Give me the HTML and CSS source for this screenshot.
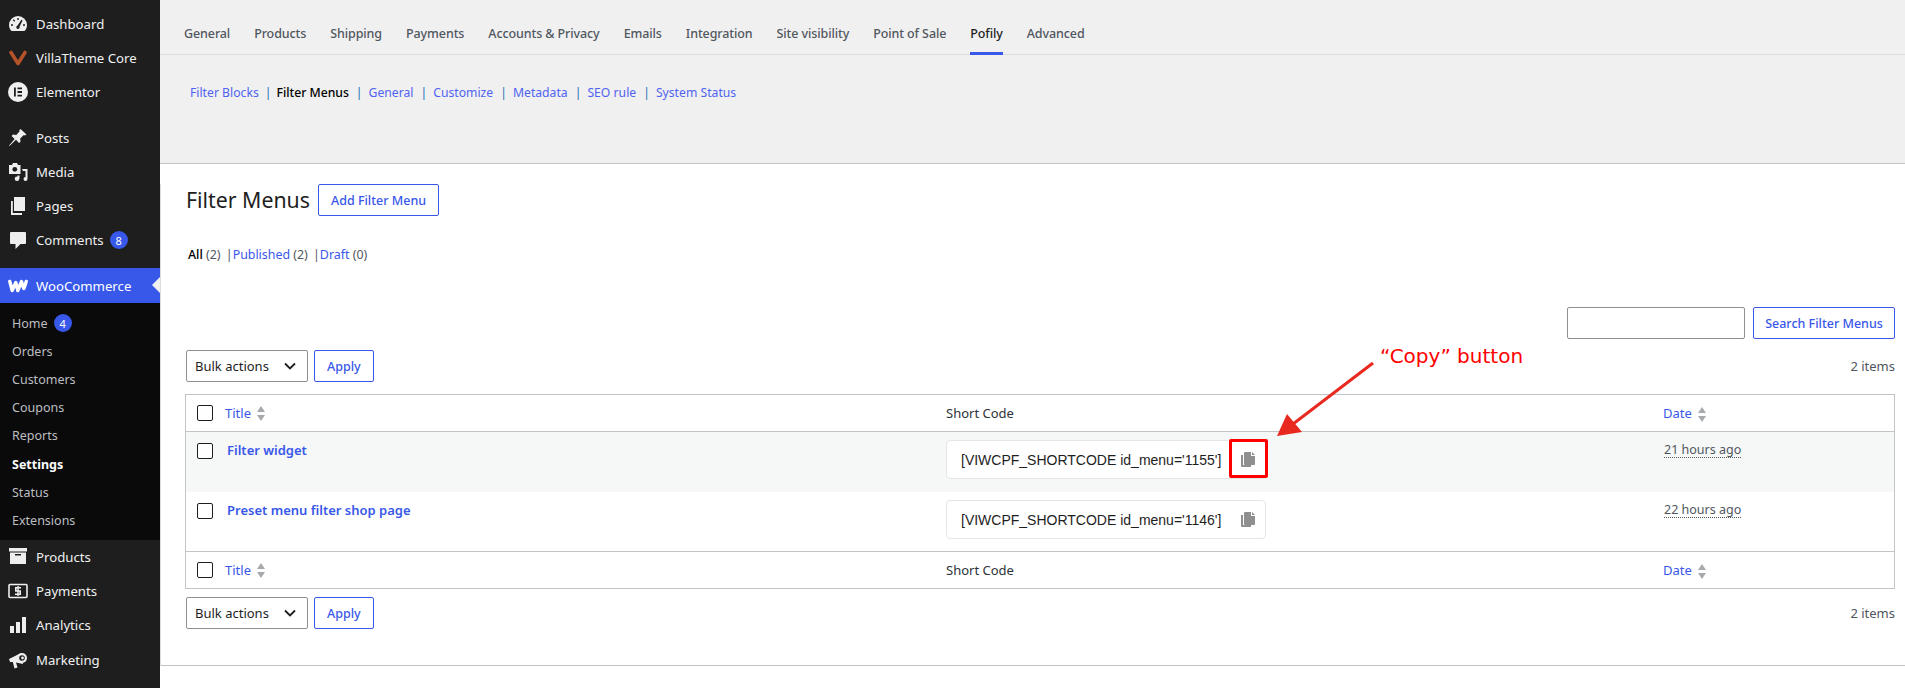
FILE: index.html
```html
<!DOCTYPE html>
<html lang="en">
<head>
    <meta charset="UTF-8">
    <title>Filter Menus</title>
    <link rel="stylesheet" href="styles.css">
</head>

<body>

<div class="wrap">

<nav class="sidebar">
    <ul class="menu">
        <li><svg class="ico" viewBox="0 0 20 20"><path fill="#eee" d="M10 2a9 9 0 0 0-9 9c0 2.700 1.100 4.700 2.600 6h12.800c1.500-1.300 2.600-3.300 2.600-6a9 9 0 0 0-9-9z"/><path fill="#1e1e1e" d="M9.300 4h1.400v2H9.300zM4.800 6.300l1-1 1.400 1.400-1 1zM3 10.300h2v1.400H3zM15 10.300h2v1.400h-2zM13.400 5.800l1.200.7-3 6a1.700 1.700 0 1 1-2-1z"/></svg>Dashboard</li>
        <li><svg class="ico" viewBox="0 0 20 20"><path fill="none" stroke="#b4532a" stroke-width="3.600" stroke-linecap="round" stroke-linejoin="round" d="M3 4.500l7 11 7-11"/></svg>VillaTheme Core</li>
        <li><svg class="ico" viewBox="0 0 20 20"><circle cx="10" cy="10" r="10" fill="#f0f0f1"/><path fill="#1e1e1e" d="M6 5.500h1.800v9H6zM9.500 5.500H14v1.800H9.500zM9.500 9.100H14v1.800H9.500zM9.500 12.700H14v1.800H9.500z"/></svg>Elementor</li>
        <li class="sep"><svg class="ico" viewBox="0 0 20 20"><path fill="#eee" d="M12.500 1l6 5.500-1.700 1-1-.4-3.600 3.300.3 3.300-1.500 1.300-3-3.200L1.500 18l-.4-.5 5.500-6.500-3-3 1.400-1.400 3.300.4 3.300-3.700-.3-1z"/></svg>Posts</li>
        <li><svg class="ico" viewBox="0 0 20 20"><path fill="#eee" d="M1 3h3l1-2h4l1 2h2.500v9H1z"/><circle cx="6.800" cy="7.300" r="2.400" fill="#1e1e1e"/><path fill="#eee" d="M14 7h5.500v10a2 2 0 1 1-2-2v-6H15z"/><circle cx="9" cy="16.700" r="2.300" fill="#eee"/><path fill="#eee" d="M9.500 13.500h2v3h-2z"/></svg>Media</li>
        <li><svg class="ico" viewBox="0 0 20 20"><path fill="#eee" d="M6 1h11v14H6z"/><path fill="#eee" d="M3 5h1.800v12H14v2H3z"/></svg>Pages</li>
        <li><svg class="ico" viewBox="0 0 20 20"><path fill="#eee" d="M3 2h14a1 1 0 0 1 1 1v10a1 1 0 0 1-1 1h-4.500L7.500 19v-5H3a1 1 0 0 1-1-1V3a1 1 0 0 1 1-1z"/></svg>Comments <span class="badge">8</span></li>
        <li class="sep current"><svg class="ico" viewBox="0 0 20 20"><path fill="none" stroke="#fff" stroke-width="3.400" stroke-linejoin="round" stroke-linecap="round" d="M1.800 5.500l2.400 9 3.600-8 2 8 3.700-9c.8 3.500 1.500 5.500 2.300 7 1-2 1.500-4 2.400-7"/></svg>WooCommerce</li>
    </ul>
    <ul class="submenu">
        <li>Home <span class="badge">4</span></li>
        <li>Orders</li>
        <li>Customers</li>
        <li>Coupons</li>
        <li>Reports</li>
        <li class="active">Settings</li>
        <li>Status</li>
        <li>Extensions</li>
    </ul>
    <ul class="menu">
        <li><svg class="ico" viewBox="0 0 20 20"><path fill="#eee" d="M1 1h18v3.500H1zM2 5.500h16V17H2z"/><path fill="#1e1e1e" d="M7 7h6v1.500H7z"/></svg>Products</li>
        <li><svg class="ico" viewBox="0 0 20 20"><rect x="1" y="3.500" width="18" height="13" rx="1" fill="none" stroke="#eee" stroke-width="1.600"/><path fill="#eee" d="M7 6h6v1.600H8.600v1.600H13V14H7v-1.600h4.400v-1.600H7z"/><path fill="#eee" d="M9.300 5h1.400v10H9.300z"/></svg>Payments</li>
        <li><svg class="ico" viewBox="0 0 20 20"><path fill="#eee" d="M2 11h4v7H2zM8 7h4v11H8zM14 2h4v16h-4z"/></svg>Analytics</li>
        <li class="last"><svg class="ico" viewBox="0 0 20 20"><path fill="#eee" d="M1 9l12-6 2 11-7-1.500 1.500 5-3 1-1.700-6.500H2z"/><circle cx="14" cy="8" r="5" fill="#eee"/><circle cx="14" cy="8" r="2.800" fill="#1e1e1e"/><circle cx="14.500" cy="8" r="1.400" fill="#eee"/></svg>Marketing</li>
    </ul>
</nav>

<main class="main">
    <div class="topbar">
        <div class="tabs">
            <a>General</a>
            <a>Products</a>
            <a>Shipping</a>
            <a>Payments</a>
            <a>Accounts &amp; Privacy</a>
            <a>Emails</a>
            <a>Integration</a>
            <a>Site visibility</a>
            <a>Point of Sale</a>
            <a class="on">Pofily</a>
            <a>Advanced</a>
        </div>
        <div class="subtabs">
            <a>Filter Blocks</a><i>|</i>
            <a class="on">Filter Menus</a><i class="wide">|</i>
            <a>General</a><i class="wide">|</i>
            <a>Customize</a><i class="wide">|</i>
            <a>Metadata</a><i class="wide">|</i>
            <a>SEO rule</a><i class="wide">|</i>
            <a>System Status</a>
        </div>
    </div>

    <div class="page">
        <div class="title-row">
            <h1>Filter Menus</h1>
            <button class="btn">Add Filter Menu</button>
        </div>

        <div class="views">
            <b>All</b> <span class="count">(2)</span>
            <i>|</i><a>Published</a> <span class="count">(2)</span>
            <i>|</i><a>Draft</a> <span class="count">(0)</span>
        </div>

        <div class="search-row">
            <input class="search" type="text">
            <button class="btn btn-search">Search Filter Menus</button>
        </div>

        <div class="tablenav nav-top">
            <div class="bulk">
                <div class="select">Bulk actions
                    <svg viewBox="0 0 12 8" width="12" height="8"><path d="M1 1.500l5 5 5-5" fill="none" stroke="#1e1e1e" stroke-width="1.800"/></svg>
                </div>
                <button class="btn">Apply</button>
            </div>
            <span class="num">2 items</span>
        </div>

        <table class="list">
            <colgroup><col class="c1"><col class="c2"><col class="c3"></colgroup>
            <thead>
                <tr>
                    <th><div class="cell"><input type="checkbox"><a>Title</a><span class="sort"></span></div></th>
                    <th>Short Code</th>
                    <th><a>Date</a><span class="sort"></span></th>
                </tr>
            </thead>
            <tbody>
                <tr class="alt">
                    <td><div class="cell"><input type="checkbox"><a class="name">Filter widget</a></div></td>
                    <td>
                        <div class="code">[VIWCPF_SHORTCODE id_menu='1155']
                            <span class="copy marked">
                                <svg viewBox="0 0 14 15" width="14" height="15"><path fill="#8f8f8f" d="M0 3h2v10h8v2H1a1 1 0 0 1-1-1z"/><path fill="#8f8f8f" d="M3 1a1 1 0 0 1 1-1h6v4h4v8a1 1 0 0 1-1 1H4a1 1 0 0 1-1-1z"/><path fill="#8f8f8f" d="M11 0l3 3h-3z"/></svg>
                            </span>
                        </div>
                    </td>
                    <td><abbr>21 hours ago</abbr></td>
                </tr>
                <tr>
                    <td><div class="cell"><input type="checkbox"><a class="name">Preset menu filter shop page</a></div></td>
                    <td>
                        <div class="code">[VIWCPF_SHORTCODE id_menu='1146']
                            <span class="copy">
                                <svg viewBox="0 0 14 15" width="14" height="15"><path fill="#8f8f8f" d="M0 3h2v10h8v2H1a1 1 0 0 1-1-1z"/><path fill="#8f8f8f" d="M3 1a1 1 0 0 1 1-1h6v4h4v8a1 1 0 0 1-1 1H4a1 1 0 0 1-1-1z"/><path fill="#8f8f8f" d="M11 0l3 3h-3z"/></svg>
                            </span>
                        </div>
                    </td>
                    <td><abbr>22 hours ago</abbr></td>
                </tr>
            </tbody>
            <tfoot>
                <tr>
                    <th><div class="cell"><input type="checkbox"><a>Title</a><span class="sort"></span></div></th>
                    <th>Short Code</th>
                    <th><a>Date</a><span class="sort"></span></th>
                </tr>
            </tfoot>
        </table>

        <div class="tablenav nav-bottom">
            <div class="bulk">
                <div class="select">Bulk actions
                    <svg viewBox="0 0 12 8" width="12" height="8"><path d="M1 1.500l5 5 5-5" fill="none" stroke="#1e1e1e" stroke-width="1.800"/></svg>
                </div>
                <button class="btn">Apply</button>
            </div>
            <span class="num">2 items</span>
        </div>

        <div class="rule"></div>
    </div>
</main>

<!-- annotation drawn on top of the screenshot -->
<span class="note">“Copy” button</span>
<svg class="arrow" viewBox="0 0 110 85" width="110" height="85">
    <path d="M100 5L20 66" stroke="#e8291f" stroke-width="3" fill="none"/>
    <path d="M4 78L14 56 29 74z" fill="#e8291f"/>
</svg>

</div>

</body>
</html>
```

FILE: styles.css
```css
*, *::before, *::after {
    box-sizing: border-box;
}

body {
    margin: 0;
    background: #fff;
    color: #1e1e1e;
    font-family: "Noto Sans", sans-serif;
    font-size: 13px;
}

.wrap {
    position: relative;
    display: flex;
    height: 688px;
    overflow: hidden;
}

a {
    color: #3858e9;
}

/* sidebar */
.sidebar {
    flex: 0 0 160px;
    padding-top: 7px;
    background: #1e1e1e;
    color: #f0f0f1;
}

.sidebar ul {
    margin: 0;
    padding: 0;
    list-style: none;
}

.menu li {
    display: flex;
    align-items: center;
    height: 34px;
    padding-left: 8px;
    font-size: 13.200px;
}

.menu .sep {
    margin-top: 12px;
}

.menu .last {
    margin-top: 1px;
}

.ico {
    flex: none;
    width: 20px;
    height: 20px;
    margin-right: 8px;
}

.menu .current {
    position: relative;
    height: 35px;
    margin-top: 11px;
    background: #3858e9;
    color: #fff;
}

.current::after {
    content: "";
    position: absolute;
    right: 0;
    top: 9px;
    border: 8px solid transparent;
    border-left-width: 0;
    border-right-color: #f0f0f1;
}

.badge {
    display: inline-flex;
    align-items: center;
    justify-content: center;
    width: 18px;
    height: 18px;
    margin-left: 6px;
    border-radius: 50%;
    background: #3858e9;
    color: #fff;
    font-size: 11px;
}

.submenu {
    height: 237px;
    padding-top: 6px !important;
    background: #0a0a0a;
    color: #bdbec1;
}

.submenu li {
    display: flex;
    align-items: center;
    height: 28.200px;
    padding-left: 12px;
    font-size: 12.500px;
}

.submenu .active {
    color: #fff;
    font-weight: 700;
}

/* settings tabs */
.main {
    flex: 1;
    min-width: 0;
}

.topbar {
    height: 164px;
    background: #f0f0f1;
    border-bottom: 1px solid #c3c4c7;
}

.tabs {
    display: flex;
    gap: 24px;
    height: 55px;
    padding-left: 24px;
    border-bottom: 1px solid #dcdcde;
    font-size: 12.500px;
    letter-spacing: -0.100px;
}

.tabs a {
    height: 55px;
    padding-top: 24px;
    color: #50575e;
    line-height: 20px;
    font-weight: 500;
}

.tabs .on {
    color: #1e1e1e;
    border-bottom: 3px solid #3858e9;
}

.subtabs {
    display: flex;
    align-items: center;
    height: 20px;
    margin-top: 27px;
    padding-left: 30px;
    font-size: 12.200px;
}

.subtabs a {
    color: #4f63f0;
}

.subtabs .on {
    color: #000;
    font-weight: 500;
}

.subtabs i {
    margin: 0 5px 0 6px;
    color: #2271b1;
    font-style: normal;
}

.subtabs .wide {
    margin: 0 6px 0 7px;
}

/* page */
.page {
    padding: 0 10px 0 24px;
    border-left: 1px solid #dcdcde;
}

.title-row {
    display: flex;
    align-items: center;
    gap: 8px;
    margin-top: 20px;
}

h1 {
    margin: 0;
    padding-left: 1px;
    font-size: 21.300px;
    font-weight: 400;
    line-height: 32px;
}

.btn {
    height: 32px;
    padding: 0 12px;
    background: #fff;
    border: 1px solid #3858e9;
    border-radius: 2px;
    color: #3858e9;
    font-family: inherit;
    font-size: 12.500px;
    font-weight: 500;
}

.btn-search {
    width: 142px;
    padding: 0;
}

.views {
    margin-top: 29px;
    padding-left: 3px;
    font-size: 12.400px;
    line-height: 20px;
}

.views b {
    color: #000;
    font-weight: 500;
}

.views i {
    margin-left: 2px;
    color: #50575e;
    font-style: normal;
}

.count {
    color: #50575e;
}

.search-row {
    display: flex;
    justify-content: flex-end;
    gap: 8px;
    margin-top: 42px;
}

.search {
    width: 178px;
    height: 32px;
    border: 1px solid #8c8f94;
    border-radius: 2px;
}

.tablenav {
    display: flex;
    justify-content: space-between;
    align-items: center;
    height: 32px;
}

.nav-top {
    margin-top: 11px;
}

.nav-bottom {
    margin-top: 8px;
}

.bulk {
    display: flex;
    gap: 6px;
    padding-left: 1px;
}

.select {
    display: flex;
    align-items: center;
    justify-content: space-between;
    width: 122px;
    height: 32px;
    padding: 0 11px 0 8px;
    border: 1px solid #8c8f94;
    border-radius: 2px;
}

.num {
    color: #50575e;
}

/* table */
.list {
    width: 1710px;
    margin-top: 12px;
    border: 1px solid #c3c4c7;
    border-spacing: 0;
    table-layout: fixed;
}

.c1 {
    width: 750px;
}

.c2 {
    width: 717px;
}

th {
    height: 37px;
    padding: 0 10px;
    border-bottom: 1px solid #c3c4c7;
    font-weight: 400;
    text-align: left;
    color: #2c3338;
}

tfoot th {
    height: 37px;
    border-top: 1px solid #c3c4c7;
    border-bottom: 0;
}

td {
    height: 59px;
    padding: 8px 10px 0;
    vertical-align: top;
}

tbody tr:first-child td {
    height: 60px;
}

.alt td {
    background: #f6f7f7;
}

.cell {
    display: flex;
    align-items: center;
    padding-left: 1px;
}

input[type="checkbox"] {
    flex: none;
    appearance: none;
    width: 16px;
    height: 16px;
    margin: 0 12px 0 0;
    background: #fff;
    border: 1px solid #1e1e1e;
    border-radius: 2px;
}

td .cell {
    margin-top: 1px;
}

.name {
    margin: 0 0 2px 2px;
    font-weight: 600;
}

.sort {
    display: inline-block;
    position: relative;
    width: 8px;
    height: 15px;
    margin-left: 6px;
    vertical-align: middle;
}

.sort::before,
.sort::after {
    content: "";
    position: absolute;
    left: 0;
    border-left: 4px solid transparent;
    border-right: 4px solid transparent;
}

.sort::before {
    top: 0;
    border-bottom: 6px solid #a7aaad;
}

.sort::after {
    bottom: 0;
    border-top: 6px solid #a7aaad;
}

.code {
    display: flex;
    align-items: center;
    width: 320px;
    height: 39px;
    padding-left: 14px;
    background: #fff;
    border: 1px solid #e4e5e7;
    border-radius: 4px;
    color: #1e1e1e;
    font-family: "Liberation Sans", Arial, sans-serif;
    font-size: 14px;
}

.copy {
    position: relative;
    display: flex;
    margin-left: 20px;
}

/* red box added by whoever annotated the screenshot */
.marked::after {
    content: "";
    position: absolute;
    left: -12px;
    top: -13px;
    width: 39px;
    height: 39px;
    border: 3px solid #f00;
    border-radius: 2px;
}

abbr {
    color: #50575e;
    border-bottom: 1px dotted #50575e;
    font-size: 12.500px;
}

td abbr {
    display: inline-block;
    margin: 1px 0 0 1px;
    line-height: 14px;
}

.rule {
    margin: 36px -10px 0 -24px;
    border-top: 1px solid #c3c4c7;
}

/* annotation */
.note {
    position: absolute;
    left: 1380px;
    top: 344px;
    color: #f00;
    font-family: "DejaVu Sans", sans-serif;
    font-size: 20px;
    line-height: 24px;
    white-space: nowrap;
}

.arrow {
    position: absolute;
    left: 1273px;
    top: 358px;
}
```
